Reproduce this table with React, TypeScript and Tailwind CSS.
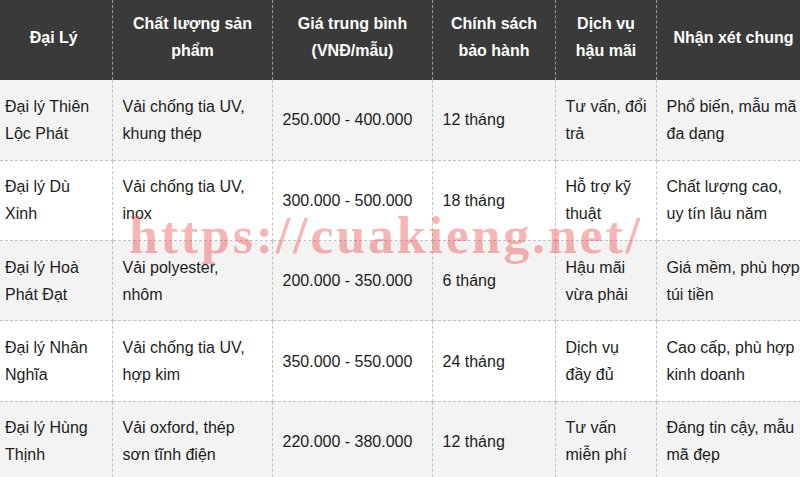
import React from "react";

const headers = [
  "Đại Lý",
  "Chất lượng sản phẩm",
  "Giá trung bình (VNĐ/mẫu)",
  "Chính sách bảo hành",
  "Dịch vụ hậu mãi",
  "Nhận xét chung",
];

const rows: string[][] = [
  ["Đại lý Thiên Lộc Phát", "Vải chống tia UV, khung thép", "250.000 - 400.000", "12 tháng", "Tư vấn, đổi trả", "Phổ biến, mẫu mã đa dạng"],
  ["Đại lý Dù Xinh", "Vải chống tia UV, inox", "300.000 - 500.000", "18 tháng", "Hỗ trợ kỹ thuật", "Chất lượng cao, uy tín lâu năm"],
  ["Đại lý Hoà Phát Đạt", "Vải polyester, nhôm", "200.000 - 350.000", "6 tháng", "Hậu mãi vừa phải", "Giá mềm, phù hợp túi tiền"],
  ["Đại lý Nhân Nghĩa", "Vải chống tia UV, hợp kim", "350.000 - 550.000", "24 tháng", "Dịch vụ đầy đủ", "Cao cấp, phù hợp kinh doanh"],
  ["Đại lý Hùng Thịnh", "Vải oxford, thép sơn tĩnh điện", "220.000 - 380.000", "12 tháng", "Tư vấn miễn phí", "Đáng tin cậy, mẫu mã đẹp"],
];

const widths = [117, 160, 160, 123, 101, 154];

export default function App() {
  return (
    <div className="relative w-[800px] h-[477px] overflow-hidden bg-white [font-family:'Liberation_Sans',Arial,sans-serif]">
      <table className="ml-[-5px] w-[815px] table-fixed border-collapse text-[16px] leading-[27px]">
        <colgroup>
          {widths.map((w, i) => (
            <col key={i} style={{ width: w }} />
          ))}
        </colgroup>
        <thead>
          <tr className="bg-[#3a3a3a]">
            {headers.map((h, i) => (
              <th
                key={i}
                className="h-[80px] pl-[9px] pr-[8px] pb-[6px] text-center align-middle font-bold text-white border-r border-dashed border-r-[#9a9a9a]"
              >
                {h}
              </th>
            ))}
          </tr>
        </thead>
        <tbody>
          {rows.map((r, ri) => (
            <tr key={ri} className={ri % 2 === 0 ? "bg-[#f3f3f3]" : "bg-white"}>
              {r.map((c, ci) => (
                <td
                  key={ci}
                  className={`h-[80.3px] pl-[10px] ${ci === 1 ? "pr-[14px]" : "pr-[8px]"} align-middle text-left text-[#1c1c1c] border-r border-b border-dashed border-[#c2c2c2]`}
                >
                  {c}
                </td>
              ))}
            </tr>
          ))}
        </tbody>
      </table>
      <div className="pointer-events-none absolute left-[129px] top-[210px] whitespace-nowrap text-[52px] leading-none font-bold tracking-[2.8px] text-[rgba(235,60,60,0.38)] [font-family:'Liberation_Serif','Times_New_Roman',serif]">
        https://cuakieng.net/
      </div>
    </div>
  );
}
